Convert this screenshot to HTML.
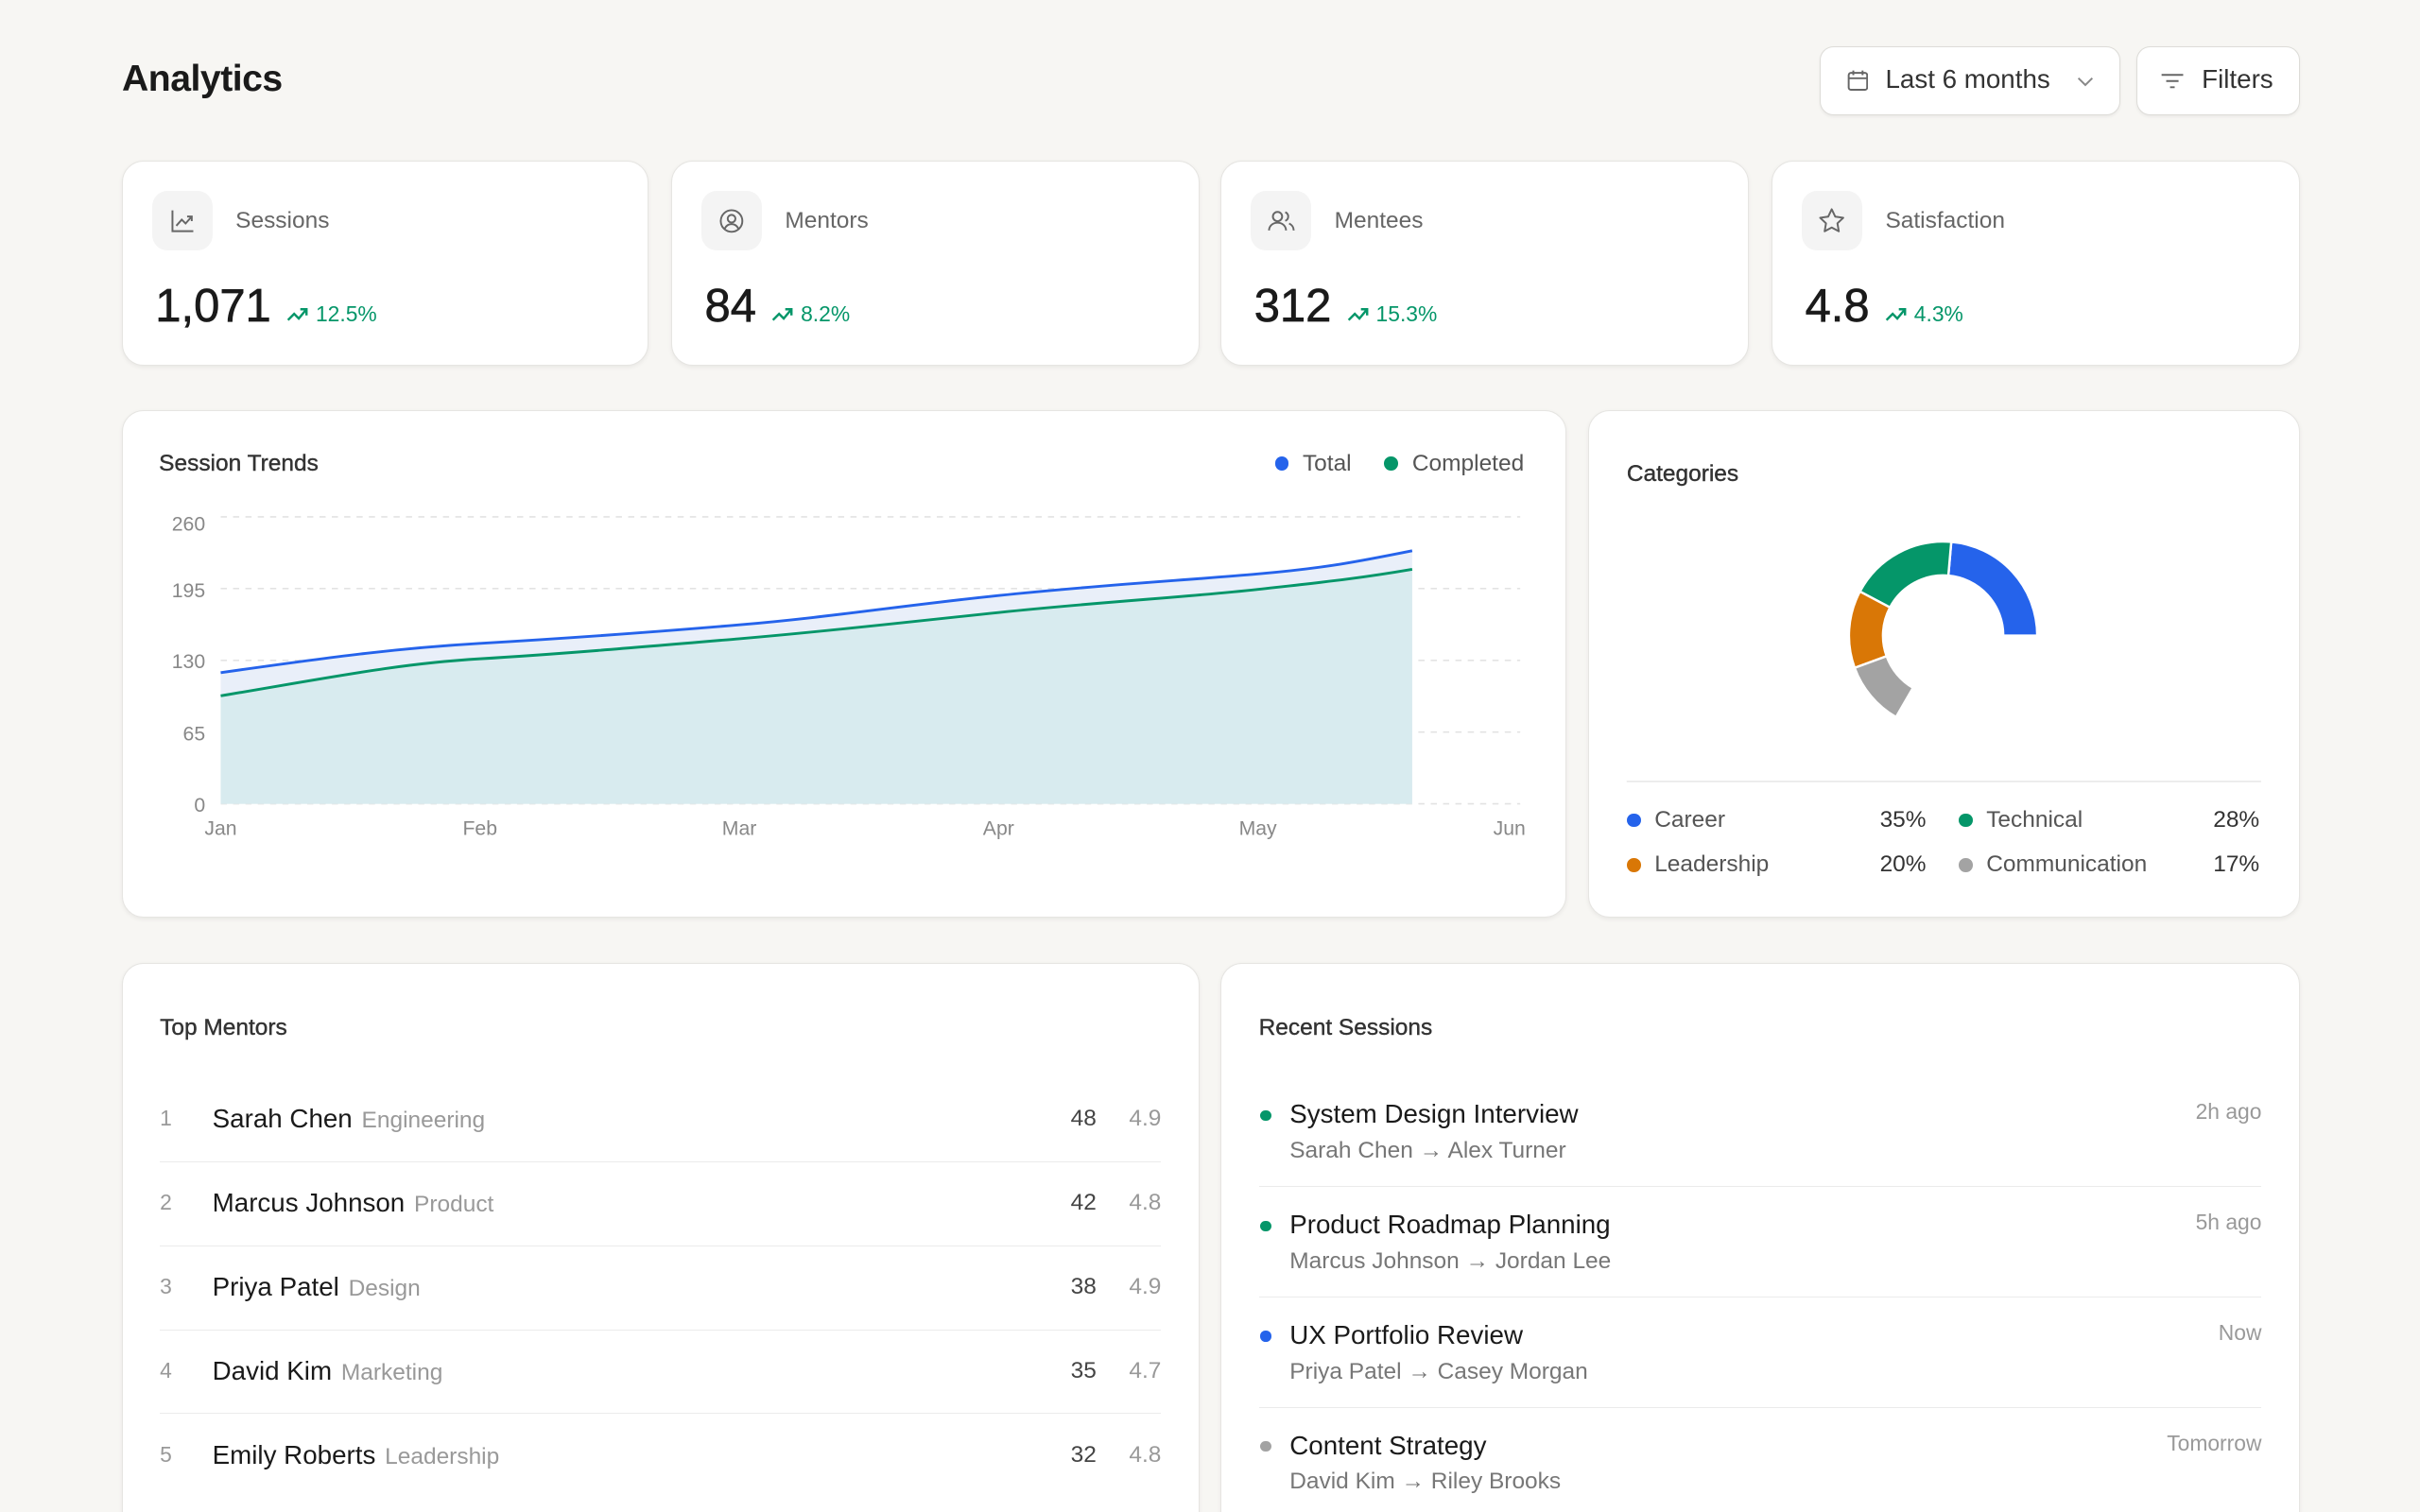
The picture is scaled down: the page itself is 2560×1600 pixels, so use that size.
<!DOCTYPE html>
<html><head><meta charset="utf-8"><style>
*{box-sizing:border-box;margin:0;padding:0}
html,body{width:2560px;height:1600px;overflow:hidden;background:#f7f6f3}
#r{zoom:1.63265;width:1568px;height:980px;position:relative;font-family:"Liberation Sans",sans-serif;color:#1a1a1a}
.a{position:absolute;white-space:nowrap}
.card{position:absolute;background:#fff;border:1px solid #e6e5e2;border-radius:14px;box-shadow:0 1px 3px rgba(0,0,0,.06)}
.btn{position:absolute;background:#fff;border:1px solid #dddcd8;border-radius:9px;box-shadow:0 1px 2px rgba(0,0,0,.05);font-size:17px;color:#333;display:flex;align-items:center}
.ib{position:absolute;left:19px;top:19px;width:39px;height:39px;border-radius:10px;background:#f4f4f4;display:flex;align-items:center;justify-content:center}
.lab{position:absolute;left:73px;top:30px;font-size:15px;color:#666}
.num{position:absolute;left:21px;top:77px;font-size:30px;font-weight:400;color:#1a1a1a;display:flex;align-items:baseline;-webkit-text-stroke:.4px #1a1a1a}
.chg{font-size:14px;color:#059669;font-weight:400;margin-left:10px;display:flex;align-items:center;-webkit-text-stroke:0}
.t{font-size:15px;color:#333;-webkit-text-stroke:.25px #333}
.row{position:absolute;left:24px;right:24px;height:54.5px;border-bottom:1px solid #ebebeb}
.row .n{position:absolute;left:0;top:18px;font-size:14px;color:#999}
.row .nm{position:absolute;left:34px;top:17px;font-size:17px;color:#1a1a1a}
.row .nm span{font-size:15px;color:#999;margin-left:6px}
.row .c{position:absolute;right:42px;top:18px;font-size:15px;color:#444}
.row .rt{position:absolute;right:0;top:18px;font-size:15px;color:#999}
.ses{position:absolute;left:24px;right:24px;height:57px;border-bottom:1px solid #ebebeb}
.ses .d{position:absolute;left:1px;top:7px;width:7px;height:7px;border-radius:50%}
.ses .ti{position:absolute;left:20px;top:0;font-size:17px;color:#1a1a1a}
.ses .su{position:absolute;left:20px;top:25px;font-size:15px;color:#777}
.ses .tm{position:absolute;right:0;top:0;font-size:14px;color:#999}
.dot{display:inline-block;width:9px;height:9px;border-radius:50%;margin-right:9px}
.lg{position:absolute;font-size:15px;color:#555;display:flex;align-items:center}
</style></head><body><div id="r">
<div class="a" style="left:79px;top:38px;font-size:24px;font-weight:700;letter-spacing:-.3px">Analytics</div>
<div class="btn" style="left:1179px;top:30px;width:195px;height:45px">
<svg style="position:absolute;left:17px;top:14px" width="14" height="15" viewBox="0 0 14 15" fill="none" stroke="#666" stroke-width="1.2"><rect x="1" y="2.5" width="12" height="11" rx="1.5"/><path d="M1 6h12M4 1v3M10 1v3"/></svg>
<span style="position:absolute;left:42px;top:11px">Last 6 months</span>
<svg style="position:absolute;left:166px;top:19px" width="11" height="7" viewBox="0 0 11 7" fill="none" stroke="#888" stroke-width="1.2"><path d="M1 1l4.5 4.5L10 1"/></svg></div>
<div class="btn" style="left:1384px;top:30px;width:106px;height:45px">
<svg style="position:absolute;left:15px;top:16px" width="16" height="12" viewBox="0 0 16 12" fill="none" stroke="#666" stroke-width="1.2"><path d="M1 2h14M4 6h8M6.5 10h3"/></svg>
<span style="position:absolute;left:42px;top:11px">Filters</span></div>

<div class="card" style="left:79px;top:104px;width:341px;height:133px"><div class="ib"><svg width="16" height="16" viewBox="0 0 16 16" fill="none" stroke="#666" stroke-width="1.2"><path d="M1.5 1v13.5H15M4 11l3.5-4 2.5 2.5L14 5M11 5h3v3"/></svg></div><div class="lab">Sessions</div><div class="num">1,071<span class="chg"><svg width="15" height="10" viewBox="0 0 15 10" fill="none" stroke="#059669" stroke-width="1.5"><path d="M1 9l4-4 3 3 5-6M9 2h4v4"/></svg>&nbsp;12.5%</span></div></div>
<div class="card" style="left:435px;top:104px;width:342px;height:133px"><div class="ib"><svg width="17" height="17" viewBox="0 0 17 17" fill="none" stroke="#666" stroke-width="1.2"><circle cx="8.5" cy="8.5" r="7"/><circle cx="8.5" cy="7" r="2.5"/><path d="M4 13.5c1-2 2.6-3 4.5-3s3.5 1 4.5 3"/></svg></div><div class="lab">Mentors</div><div class="num">84<span class="chg"><svg width="15" height="10" viewBox="0 0 15 10" fill="none" stroke="#059669" stroke-width="1.5"><path d="M1 9l4-4 3 3 5-6M9 2h4v4"/></svg>&nbsp;8.2%</span></div></div>
<div class="card" style="left:791px;top:104px;width:342px;height:133px"><div class="ib"><svg width="19" height="16" viewBox="0 0 19 16" fill="none" stroke="#666" stroke-width="1.2"><circle cx="7" cy="5" r="3"/><path d="M1.5 14c0-3 2.5-5 5.5-5s5.5 2 5.5 5M12 2.2a3 3 0 010 5.6M14.5 9.5c1.8.8 3 2.5 3 4.5"/></svg></div><div class="lab">Mentees</div><div class="num">312<span class="chg"><svg width="15" height="10" viewBox="0 0 15 10" fill="none" stroke="#059669" stroke-width="1.5"><path d="M1 9l4-4 3 3 5-6M9 2h4v4"/></svg>&nbsp;15.3%</span></div></div>
<div class="card" style="left:1148px;top:104px;width:342px;height:133px"><div class="ib"><svg width="18" height="18" viewBox="0 0 18 18" fill="none" stroke="#666" stroke-width="1.2" stroke-linejoin="round"><path d="M9 1.5l2.3 4.8 5.2.7-3.8 3.6.9 5.2L9 13.3l-4.6 2.5.9-5.2L1.5 7l5.2-.7z"/></svg></div><div class="lab">Satisfaction</div><div class="num">4.8<span class="chg"><svg width="15" height="10" viewBox="0 0 15 10" fill="none" stroke="#059669" stroke-width="1.5"><path d="M1 9l4-4 3 3 5-6M9 2h4v4"/></svg>&nbsp;4.3%</span></div></div>

<div class="card" style="left:79px;top:266px;width:936px;height:329px"></div>
<div class="a t" style="left:103px;top:292px">Session Trends</div>
<div class="lg" style="left:826px;top:292px"><span class="dot" style="background:#2563eb"></span>Total</div>
<div class="lg" style="left:897px;top:292px"><span class="dot" style="background:#059669"></span>Completed</div>
<svg class="a" style="left:0;top:0" width="1568" height="600">
<g stroke="#e3e3e3" stroke-dasharray="4 4"><path d="M143 335H985M143 381.5H985M143 428H985M143 474.5H985M143 521H985"/></g>
<path d="M143 436C220 425 260 420 311 417S420 410 479 405S580 393 647 386S770 376 815 372S880 364 915 357V521H143Z" fill="#e9eff9"/>
<path d="M143 451C220 438 260 430 311 427S420 419 479 414S580 404 647 397S770 387 815 382S880 375 915 369V521H143Z" fill="#d8ebef"/>
<path d="M143 436C220 425 260 420 311 417S420 410 479 405S580 393 647 386S770 376 815 372S880 364 915 357" fill="none" stroke="#2563eb" stroke-width="1.8"/>
<path d="M143 451C220 438 260 430 311 427S420 419 479 414S580 404 647 397S770 387 815 382S880 375 915 369" fill="none" stroke="#059669" stroke-width="1.8"/>
<g font-family="Liberation Sans" font-size="13" fill="#888" text-anchor="end"><text x="133" y="344">260</text><text x="133" y="387">195</text><text x="133" y="433">130</text><text x="133" y="480">65</text><text x="133" y="526">0</text></g>
<g font-family="Liberation Sans" font-size="13" fill="#888" text-anchor="middle"><text x="143" y="541">Jan</text><text x="311" y="541">Feb</text><text x="479" y="541">Mar</text><text x="647" y="541">Apr</text><text x="815" y="541">May</text><text x="978" y="541">Jun</text></g>
</svg>

<div class="card" style="left:1029px;top:266px;width:461px;height:329px"></div>
<div class="a t" style="left:1054px;top:299px">Categories</div>
<svg class="a" style="left:0;top:0" width="1568" height="600"><g stroke="#fff" stroke-width="1.5">
<path d="M1320 412A61 61 0 0 0 1264.3 351.2L1262.4 373.1A39 39 0 0 1 1298 412Z" fill="#2563eb"/>
<path d="M1264.3 351.2A61 61 0 0 0 1205.1 383.4L1224.6 393.7A39 39 0 0 1 1262.4 373.1Z" fill="#059669"/>
<path d="M1205.1 383.4A61 61 0 0 0 1201.7 432.9L1222.4 425.3A39 39 0 0 1 1224.6 393.7Z" fill="#d97706"/>
<path d="M1201.7 432.9A61 61 0 0 0 1228.5 464.8L1239.5 445.8A39 39 0 0 1 1222.4 425.3Z" fill="#a3a3a3"/></g>
<path d="M1054 506.5H1465" stroke="#e8e8e8"/></svg>
<div class="lg" style="left:1054px;top:523px"><span class="dot" style="background:#2563eb"></span>Career</div><div class="a" style="left:1218px;top:523px;font-size:15px;color:#333">35%</div>
<div class="lg" style="left:1269px;top:523px"><span class="dot" style="background:#059669"></span>Technical</div><div class="a" style="left:1434px;top:523px;font-size:15px;color:#333">28%</div>
<div class="lg" style="left:1054px;top:552px"><span class="dot" style="background:#d97706"></span>Leadership</div><div class="a" style="left:1218px;top:552px;font-size:15px;color:#333">20%</div>
<div class="lg" style="left:1269px;top:552px"><span class="dot" style="background:#a3a3a3"></span>Communication</div><div class="a" style="left:1434px;top:552px;font-size:15px;color:#333">17%</div>

<div class="card" style="left:79px;top:624px;width:698px;height:400px">
<div class="a t" style="left:24px;top:33px">Top Mentors</div>
<div class="row" style="top:74px"><span class="n">1</span><span class="nm">Sarah Chen<span>Engineering</span></span><span class="c">48</span><span class="rt">4.9</span></div>
<div class="row" style="top:128.5px"><span class="n">2</span><span class="nm">Marcus Johnson<span>Product</span></span><span class="c">42</span><span class="rt">4.8</span></div>
<div class="row" style="top:183px"><span class="n">3</span><span class="nm">Priya Patel<span>Design</span></span><span class="c">38</span><span class="rt">4.9</span></div>
<div class="row" style="top:237.5px"><span class="n">4</span><span class="nm">David Kim<span>Marketing</span></span><span class="c">35</span><span class="rt">4.7</span></div>
<div class="row" style="top:292px;border:0"><span class="n">5</span><span class="nm">Emily Roberts<span>Leadership</span></span><span class="c">32</span><span class="rt">4.8</span></div>
</div>
<div class="card" style="left:791px;top:624px;width:699px;height:400px">
<div class="a t" style="left:24px;top:33px">Recent Sessions</div>
<div class="ses" style="top:88px"><span class="d" style="background:#059669"></span><span class="ti">System Design Interview</span><span class="su">Sarah Chen → Alex Turner</span><span class="tm">2h ago</span></div>
<div class="ses" style="top:159.5px"><span class="d" style="background:#059669"></span><span class="ti">Product Roadmap Planning</span><span class="su">Marcus Johnson → Jordan Lee</span><span class="tm">5h ago</span></div>
<div class="ses" style="top:231px"><span class="d" style="background:#2563eb"></span><span class="ti">UX Portfolio Review</span><span class="su">Priya Patel → Casey Morgan</span><span class="tm">Now</span></div>
<div class="ses" style="top:302.5px;border:0"><span class="d" style="background:#a3a3a3"></span><span class="ti">Content Strategy</span><span class="su">David Kim → Riley Brooks</span><span class="tm">Tomorrow</span></div>
</div>
</div></body></html>
